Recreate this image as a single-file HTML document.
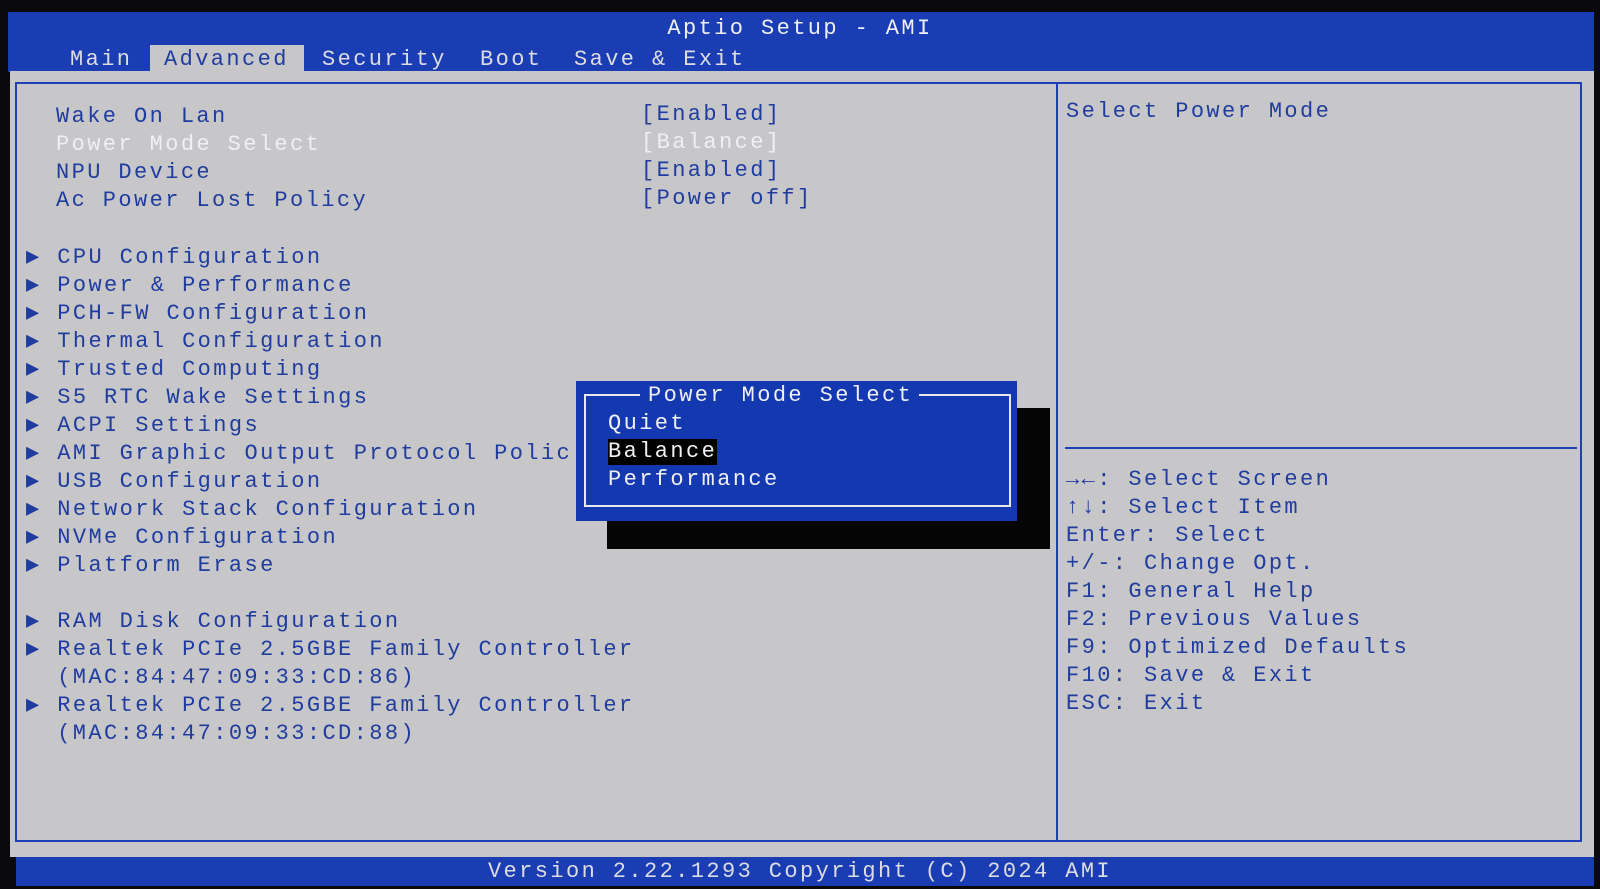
<!DOCTYPE html>
<html><head><meta charset="utf-8"><style>
body{margin:0;width:1600px;height:889px;background:#0a0a0c;overflow:hidden;position:relative;font-family:"Liberation Mono",monospace;font-size:22px;letter-spacing:2.4px}
.a{position:absolute;white-space:pre;line-height:28px}
.b{color:#1f3c9e}
.w{color:#f0f0f4}
.g{color:#dcdce2}
</style></head><body>
<div style="position:absolute;left:8px;top:12px;width:1586px;height:60px;background:#1a3db4"></div>
<div style="position:absolute;left:10px;top:71px;width:1584px;height:786px;background:#c7c7ca"></div>
<div style="position:absolute;left:150px;top:45px;width:154px;height:27px;background:#c7c7ca"></div>
<div class="a w" style="left:0;width:1600px;text-align:center;top:15px">Aptio Setup - AMI</div>
<div class="a g" style="left:70px;top:46px">Main</div>
<div class="a b" style="left:164px;top:46px">Advanced</div>
<div class="a g" style="left:322px;top:46px">Security</div>
<div class="a g" style="left:480px;top:46px">Boot</div>
<div class="a g" style="left:574px;top:46px">Save &amp; Exit</div>
<div style="position:absolute;left:15px;top:82px;width:1567px;height:760px;border:2px solid #1f3fb8;box-sizing:border-box"></div>
<div style="position:absolute;left:1056px;top:82px;width:2px;height:760px;background:#1f3fb8"></div>
<div style="position:absolute;left:1065px;top:447px;width:512px;height:2px;background:#1f3fb8"></div>
<div class="a b" style="left:56px;top:103px">Wake On Lan</div>
<div class="a w" style="left:56px;top:131px">Power Mode Select</div>
<div class="a b" style="left:56px;top:159px">NPU Device</div>
<div class="a b" style="left:56px;top:187px">Ac Power Lost Policy</div>
<div class="a b" style="left:641px;top:101px">[Enabled]</div>
<div class="a w" style="left:641px;top:129px">[Balance]</div>
<div class="a b" style="left:641px;top:157px">[Enabled]</div>
<div class="a b" style="left:641px;top:185px">[Power off]</div>
<div class="a b" style="left:26px;top:244px">▶ CPU Configuration
▶ Power &amp; Performance
▶ PCH-FW Configuration
▶ Thermal Configuration
▶ Trusted Computing
▶ S5 RTC Wake Settings
▶ ACPI Settings
▶ AMI Graphic Output Protocol Polic
▶ USB Configuration
▶ Network Stack Configuration
▶ NVMe Configuration
▶ Platform Erase

▶ RAM Disk Configuration
▶ Realtek PCIe 2.5GBE Family Controller
  (MAC:84:47:09:33:CD:86)
▶ Realtek PCIe 2.5GBE Family Controller
  (MAC:84:47:09:33:CD:88)</div>
<div class="a b" style="left:1066px;top:98px">Select Power Mode</div>
<div class="a b" style="left:1066px;top:466px">→←: Select Screen
↑↓: Select Item
Enter: Select
+/-: Change Opt.
F1: General Help
F2: Previous Values
F9: Optimized Defaults
F10: Save &amp; Exit
ESC: Exit</div>
<div style="position:absolute;left:607px;top:408px;width:443px;height:141px;background:#050505"></div>
<div style="position:absolute;left:576px;top:381px;width:441px;height:140px;background:#1438b0"></div>
<div style="position:absolute;left:584px;top:394px;width:427px;height:113px;border:2px solid #e8e8f0;box-sizing:border-box"></div>
<div class="a w" style="left:640px;top:382px;background:#1438b0;padding:0 6px 0 8px">Power Mode Select</div>
<div class="a w" style="left:608px;top:410px">Quiet</div>
<div class="a w" style="left:608px;top:438px;background:#000;line-height:26px;margin-top:1px">Balance</div>
<div class="a w" style="left:608px;top:466px">Performance</div>
<div style="position:absolute;left:16px;top:857px;width:1578px;height:29px;background:#1a3db4"></div>
<div class="a g" style="left:0;width:1600px;text-align:center;top:858px">Version 2.22.1293 Copyright (C) 2024 AMI</div>
</body></html>
